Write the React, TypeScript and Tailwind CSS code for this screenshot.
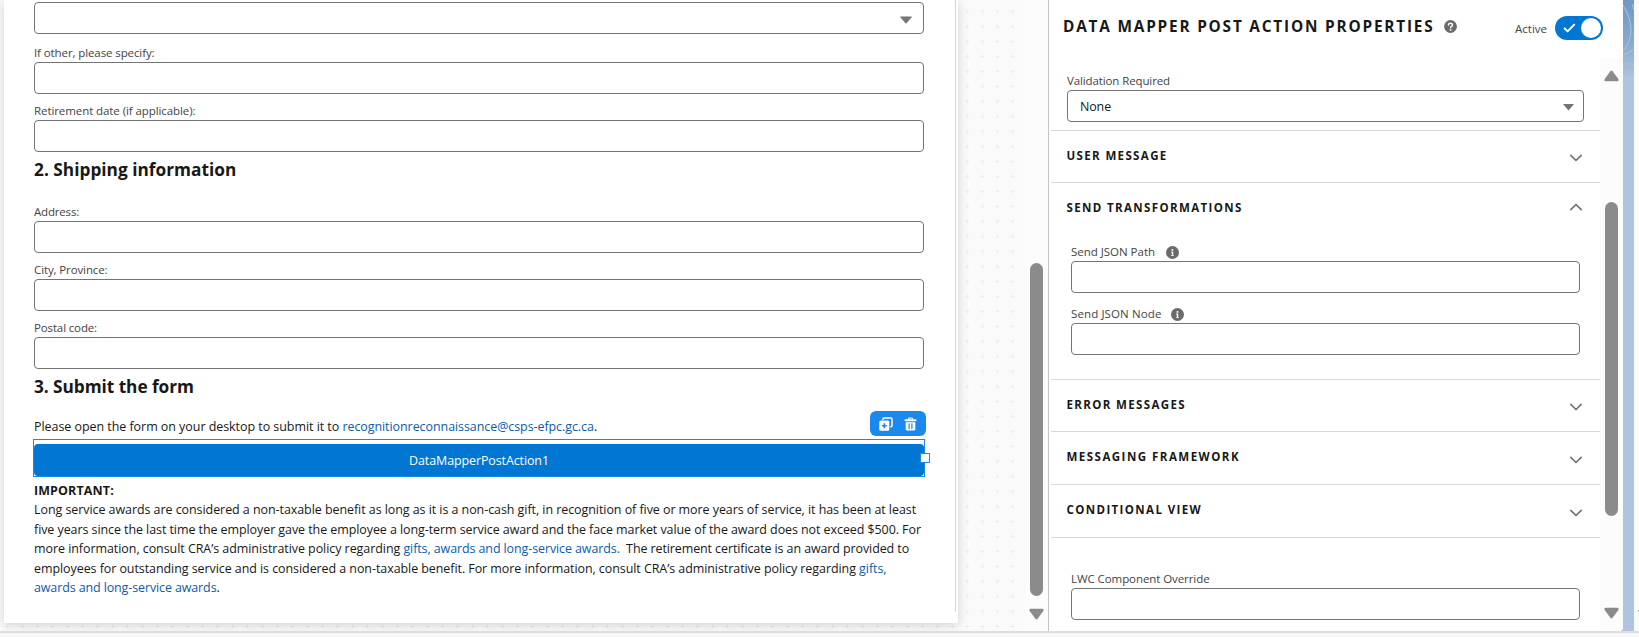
import type { ReactNode } from "react";

function Caret({ className }: { className: string }) {
  return (
    <svg className={className} width="12" height="8" viewBox="0 0 12 8" fill="#747474">
      <path d="M0.6 0.6H11.4Q12 0.6 11.6 1.2L6.5 7.2Q6 7.7 5.5 7.2L0.4 1.2Q0 0.6 0.6 0.6Z" />
    </svg>
  );
}

function Field({ label, gap, tracking, select }: { label?: string; gap: string; tracking?: string; select?: boolean }) {
  return (
    <div className={gap}>
      {label && (
        <div className={`h-[18px] whitespace-nowrap text-[11.52px] leading-[18px] text-[#444444] ${tracking}`}>{label}</div>
      )}
      <div className="flex h-8 items-center justify-end rounded-[4px] border border-[#747474] bg-white pr-[11px]">
        {select && <Caret className="mt-[4px]" />}
      </div>
    </div>
  );
}

function Heading({ children, className }: { children: ReactNode; className: string }) {
  return <h2 className={`h-6 whitespace-nowrap pt-px text-[17.28px] font-bold leading-6 text-[#181818] ${className}`}>{children}</h2>;
}

function Chevron({ up, className }: { up?: boolean; className: string }) {
  return (
    <svg className={className} width="14" height="8" viewBox="0 0 14 8" fill="none" stroke="#747474" strokeWidth="1.7" strokeLinecap="round" strokeLinejoin="round">
      <path d={up ? "M1.8 6.7L7 1.5L12.2 6.7" : "M1.8 1.4L7 6.5L12.2 1.4"} />
    </svg>
  );
}

function Section({ title, tracking, height, chevron, up }: { title: string; tracking: string; height: string; chevron: string; up?: boolean }) {
  return (
    <div className={`flex items-start justify-between border-t border-[#d8d8d8] pl-[15.5px] pr-[17px] ${height}`}>
      <h3 className={`mt-[15.5px] whitespace-nowrap text-[11.52px] font-bold leading-[18px] text-[#181818] ${tracking}`}>{title}</h3>
      <Chevron up={up} className={chevron} />
    </div>
  );
}

function InfoIcon({ className }: { className: string }) {
  return (
    <svg className={className} width="13" height="13" viewBox="0 0 13 13">
      <circle cx="6.5" cy="6.5" r="6.5" fill="#6b6b6b" />
      <circle cx="6.4" cy="3.9" r="0.95" fill="#fff" />
      <path d="M5.2 5.6H7.2V8.9H8V9.8H5V8.9H5.8V6.5H5.2Z" fill="#fff" />
    </svg>
  );
}

function Arrow({ up, className }: { up?: boolean; className: string }) {
  return (
    <svg className={className} width="15" height="12" viewBox="0 0 15 12" fill="#8b8b8b">
      <path
        d={
          up
            ? "M6.4 1.2Q7.5 -0.2 8.6 1.2L14.2 8.8Q15.4 11.3 13.2 11.3H1.8Q-0.4 11.3 0.8 8.8Z"
            : "M6.4 10.8Q7.5 12.2 8.6 10.8L14.2 3.2Q15.4 0.7 13.2 0.7H1.8Q-0.4 0.7 0.8 3.2Z"
        }
      />
    </svg>
  );
}

const link = "text-[#0b5cab]";

function SelectedAction() {
  return (
    <div className="relative -ml-px mt-[2.5px] h-[38px] w-[892px] border border-[#1b88ee] pt-1">
      <div className="flex h-8 items-center justify-center rounded-[4px] bg-[#0176d3]">
        <span className="whitespace-nowrap text-[12.48px] leading-[19px] tracking-[-0.1px] text-white">DataMapperPostAction1</span>
      </div>
      <div className="absolute -top-[29px] right-[-2px] flex h-[25px] w-14 items-center rounded-[6px] bg-[#1b88ee]">
        <svg className="ml-[9px]" width="14" height="14" viewBox="0 0 14 14">
          <path d="M4 2.2V1.9Q4 0.9 5 0.9H11.7Q13 0.9 13 2.2V8.8Q13 9.8 12 9.8H11.8" fill="none" stroke="#fff" strokeWidth="1.5" strokeLinecap="round" />
          <rect x="0.3" y="3.6" width="10" height="10.1" rx="1.5" fill="#fff" />
          <path d="M5.3 6.2V11.2M2.8 8.7H7.8" stroke="#1b88ee" strokeWidth="1.5" />
        </svg>
        <svg className="ml-[10.5px]" width="13" height="14" viewBox="0 0 13 14">
          <rect x="0.5" y="2.3" width="12" height="1.9" rx="0.9" fill="#fff" />
          <path d="M4.6 2.6V1.6Q4.6 1 5.2 1H7.8Q8.4 1 8.4 1.6V2.6" fill="none" stroke="#fff" strokeWidth="1.2" />
          <path d="M1.7 5.2H11.3V12.2Q11.3 13.6 9.9 13.6H3.1Q1.7 13.6 1.7 12.2Z" fill="#fff" />
          <path d="M5.1 6.8V11.6M7.9 6.8V11.6" stroke="#1b88ee" strokeWidth="1.2" strokeLinecap="round" />
        </svg>
      </div>
      <div className="absolute -right-[6px] top-[13px] size-[10px] border border-[#1b88ee] bg-white" />
    </div>
  );
}

function FormCard() {
  return (
    <div className="relative z-10 ml-1 h-[623px] w-[954px] bg-white shadow-[0_2px_10px_rgba(0,0,0,0.16)]">
      <div className="h-[612px] w-[952px] border-r border-[#d4d4d4] pl-[30px] pt-[2px]">
        <div className="w-[890px]">
          <Field gap="" select />
          <Field gap="mt-[10px]" label="If other, please specify:" tracking="tracking-[-0.107px]" />
          <Field gap="mt-2" label="Retirement date (if applicable):" tracking="tracking-[-0.087px]" />
          <Heading className="mt-[5px] tracking-[0.01px]">2. Shipping information</Heading>
          <Field gap="mt-[22px]" label="Address:" tracking="tracking-[-0.193px]" />
          <Field gap="mt-2" label="City, Province:" tracking="tracking-[-0.12px]" />
          <Field gap="mt-2" label="Postal code:" tracking="tracking-[-0.144px]" />
          <Heading className="mt-[5px] tracking-[-0.06px]">3. Submit the form</Heading>
          <div className="text-[12.48px] leading-[19.5px] text-[#181818]">
            <p className="mt-[19px] whitespace-pre">
              <span className="tracking-[-0.04px]">Please open the form on your desktop to submit it to </span>
              <span className={`tracking-[-0.06px] ${link}`}>recognitionreconnaissance@csps-efpc.gc.ca</span>.
            </p>
            <SelectedAction />
            <p className="mt-[3.5px] whitespace-pre font-bold tracking-[0.12px]">IMPORTANT:</p>
            <p className="whitespace-pre tracking-[-0.055px]">Long service awards are considered a non-taxable benefit as long as it is a non-cash gift, in recognition of five or more years of service, it has been at least</p>
            <p className="whitespace-pre tracking-[-0.068px]">five years since the last time the employer gave the employee a long-term service award and the face market value of the award does not exceed $500. For</p>
            <p className="whitespace-pre">
              <span className="tracking-[-0.05px]">more information, consult CRA’s administrative policy regarding </span>
              <span className={`tracking-[-0.095px] ${link}`}>gifts, awards and long-service awards.</span>
              <span className="tracking-[-0.095px]">{"  The retirement certificate is an award provided to"}</span>
            </p>
            <p className="whitespace-pre">
              <span className="tracking-[-0.061px]">employees for outstanding service and is considered a non-taxable benefit. For more information, consult CRA’s administrative policy regarding </span>
              <span className={`tracking-[-0.05px] ${link}`}>gifts,</span>
            </p>
            <p className="whitespace-pre">
              <span className={`tracking-[-0.11px] ${link}`}>awards and long-service awards</span>.
            </p>
          </div>
        </div>
      </div>
    </div>
  );
}

function Canvas() {
  return (
    <div className="relative flex h-[631px] w-[1048px] shrink-0 overflow-hidden bg-[#fafafa]">
      <svg className="absolute inset-0" width="1025" height="631">
        <defs>
          <pattern id="plus" width="15" height="15" patternUnits="userSpaceOnUse" x="0" y="4">
            <path d="M7.5 5.5V9.5M5.5 7.5H9.5" stroke="#ededed" strokeWidth="1" />
          </pattern>
        </defs>
        <rect width="1025" height="631" fill="url(#plus)" />
      </svg>
      <FormCard />
      <div className="ml-[67px] flex w-[23px] flex-col items-center bg-[#fcfcfc]">
        <div className="mt-[263px] h-[333px] w-[13px] rounded-full bg-[#8b8b8b]" />
        <Arrow className="mt-3" />
      </div>
    </div>
  );
}

function Properties() {
  return (
    <div className="h-[631px] w-[575px] shrink-0 overflow-hidden rounded-br-[4px] border-l border-[#c4c4c4] bg-white">
      <div className="flex h-[58px] pl-[14px]">
        <h1 className="mt-[15px] w-[381px] whitespace-nowrap text-[15.36px] font-bold leading-6 tracking-[1.8px] text-[#181818]">
          DATA MAPPER POST ACTION PROPERTIES
        </h1>
        <svg className="mt-5 shrink-0" width="13" height="13" viewBox="0 0 13 13">
          <circle cx="6.5" cy="6.5" r="6.4" fill="#6b6b6b" />
          <path d="M4.5 5Q4.5 3.2 6.5 3.2T8.5 5Q8.5 5.9 7.4 6.5Q6.6 6.9 6.6 7.8" fill="none" stroke="#fff" strokeWidth="1.4" strokeLinecap="round" />
          <circle cx="6.6" cy="9.9" r="0.9" fill="#fff" />
        </svg>
        <span className="ml-[58px] mt-[19.5px] text-[11.52px] leading-[18px] text-[#444444]">Active</span>
        <div className="ml-2 mt-4 flex h-6 w-12 shrink-0 items-center rounded-full bg-[#0176d3] pl-2">
          <svg width="13" height="10" viewBox="0 0 13 10" fill="none" stroke="#fff" strokeWidth="2" strokeLinecap="round" strokeLinejoin="round">
            <path d="M1.6 5.4L4.6 8.4L11.2 1.6" />
          </svg>
          <div className="ml-[5px] size-5 rounded-full bg-white" />
        </div>
      </div>
      <div className="flex h-[573px]">
        <div className="w-[551px] pl-[2px]">
          <div className="h-[72px] pl-4 pr-4 pt-[14px]">
            <div className="h-[18px] text-[11.52px] leading-[18px] tracking-[-0.122px] text-[#444444]">Validation Required</div>
            <div className="flex h-8 items-center justify-between rounded-[4px] border border-[#747474] pl-3 pr-[9px]">
              <span className="pt-[2px] text-[12.48px] leading-5 tracking-[-0.134px] text-[#181818]">None</span>
              <Caret className="mt-[2px] w-[11px]" />
            </div>
          </div>
          <Section title="USER MESSAGE" tracking="tracking-[1.36px]" height="h-[52px]" chevron="mt-[22.5px]" />
          <Section title="SEND TRANSFORMATIONS" tracking="tracking-[1.37px]" height="h-[60px]" chevron="mt-[19.5px]" up />
          <div className="h-[137px] pl-5 pr-5 text-[11.52px] leading-[18px] text-[#444444]">
            <div className="flex h-[19px]">
              <span className="pt-[0.6px] tracking-[-0.029px]">Send JSON Path</span>
              <InfoIcon className="ml-[10.5px] mt-[4.4px]" />
            </div>
            <div className="h-8 rounded-[4px] border border-[#747474]" />
            <div className="mt-[11px] flex h-[19px]">
              <span className="pt-[0.6px] tracking-[0.106px]">Send JSON Node</span>
              <InfoIcon className="ml-[9.5px] mt-[4.4px]" />
            </div>
            <div className="h-8 rounded-[4px] border border-[#747474]" />
          </div>
          <Section title="ERROR MESSAGES" tracking="tracking-[1.36px]" height="h-[52px]" chevron="mt-[22.5px]" />
          <Section title="MESSAGING FRAMEWORK" tracking="tracking-[1.474px]" height="h-[53px]" chevron="mt-[23.5px]" />
          <Section title="CONDITIONAL VIEW" tracking="tracking-[1.373px]" height="h-[53px]" chevron="mt-[23.5px]" />
          <div className="border-t border-[#d8d8d8] pl-5 pr-5 pt-[32px]">
            <div className="h-[18px] text-[11.52px] leading-[18px] tracking-[-0.086px] text-[#444444]">LWC Component Override</div>
            <div className="h-8 rounded-[4px] border border-[#747474]" />
          </div>
        </div>
        <div className="flex w-[23px] flex-col items-center bg-[#fcfcfc]">
          <Arrow up className="mt-3" />
          <div className="mt-[120px] h-[314px] w-[13px] rounded-full bg-[#8b8b8b]" />
          <Arrow className="mt-[91px]" />
        </div>
      </div>
    </div>
  );
}

export default function App() {
  return (
    <div className="h-[637px] w-[1639px] overflow-hidden bg-[#f7f7f7] font-['Open_Sans','Noto_Sans',sans-serif]">
      <div className="flex h-[631px] bg-[#fafafa]">
        <div className="flex w-[1634px] bg-[#b0c4df]">
          <Canvas />
          <Properties />
          <svg width="11" height="631" viewBox="0 0 11 631">
            <defs>
              <linearGradient id="sky" x1="0" y1="0" x2="0" y2="1">
                <stop offset="0" stopColor="#6f98c6" />
                <stop offset="0.5" stopColor="#86a8d0" />
                <stop offset="1" stopColor="#b0c4df" />
              </linearGradient>
            </defs>
            <rect width="11" height="80" fill="url(#sky)" />
            <path d="M0 5Q8 18 8 30Q8 42 0 51M0 55Q6 53 11 49M0 65Q6 61 11 65M9.5 4Q10 8 11 10" fill="none" stroke="#a9c3e2" strokeWidth="1" />
          </svg>
        </div>
        <svg className="mt-[609px]" width="5" height="5" viewBox="0 0 5 5">
          <rect x="4" y="1" width="1" height="1.5" fill="#999" />
        </svg>
      </div>
      <div className="h-[2px] bg-[#dedede]" />
    </div>
  );
}
